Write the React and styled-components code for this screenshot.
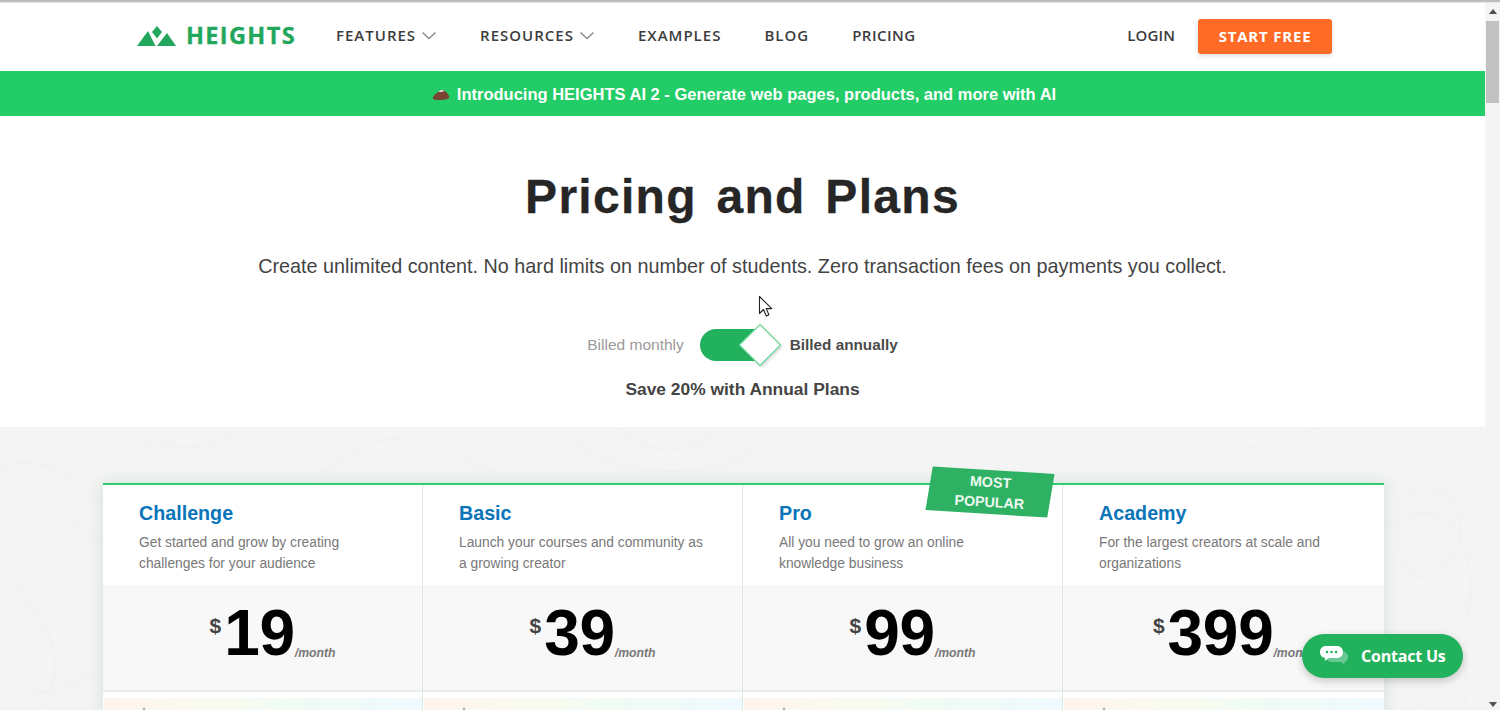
import React from "react";
import styled, { createGlobalStyle } from "styled-components";

const Global = createGlobalStyle`
  html, body { margin: 0; padding: 0; height: 100%; overflow: hidden; background: #fff; }
  * { box-sizing: border-box; }
  body { font-family: "Liberation Sans", Arial, sans-serif; color: #333; }
`;

const Shell = styled.div`
  position: relative;
  width: 1500px;
  height: 710px;
  overflow: hidden;
  display: flex;
  flex-direction: column;
`;
const WindowEdge = styled.div`
  height: 3px;
  flex: none;
  background: linear-gradient(#bdbdbd 0 2px, #e8e8e8 2px);
`;
const Body = styled.div`
  flex: 1;
  min-height: 0;
  display: flex;
`;
const Page = styled.main`
  width: 1485px;
  flex: none;
  overflow: hidden;
`;

const Scrollbar = styled.div`
  width: 15px;
  flex: none;
  display: flex;
  flex-direction: column;
  align-items: center;
  justify-content: space-between;
  padding: 6px 0 3px;
  background: #f4f4f4;
`;
const ScrollThumb = styled.div`
  width: 13px;
  height: 82px;
  margin-top: 7px;
  background: #c1c1c1;
`;
const ScrollSpacer = styled.div`
  flex: 1;
`;
const Arrow = styled.div`
  width: 0;
  height: 0;
  border-left: 4px solid transparent;
  border-right: 4px solid transparent;
  ${(p) => (p.$down ? "border-top: 5px solid #505050;" : "border-bottom: 5px solid #505050;")}
`;

const Nav = styled.header`
  height: 68px;
  display: flex;
  align-items: center;
  padding: 0 153px 2px 137px;
  background: #fff;
`;
const Logo = styled.div`
  display: flex;
  align-items: center;
  gap: 9px;
  width: 199px;
  flex: none;
`;
const LogoWord = styled.span`
  font-family: "Open Sans", sans-serif;
  font-weight: 700;
  font-size: 23.5px;
  letter-spacing: 1.35px;
  line-height: 1;
  color: #23a75d;
  -webkit-text-stroke: 0.3px #23a75d;
`;
const NavItems = styled.nav`
  display: flex;
  align-items: center;
  gap: 43px;
  flex: 1;
  margin-top: -2px;
`;
const NavItem = styled.a`
  display: flex;
  align-items: center;
  gap: 5px;
  font-family: "Open Sans", sans-serif;
  font-weight: 600;
  font-size: 15px;
  letter-spacing: ${(p) => p.$tracking ?? 1}px;
  color: #3c3c3c;
`;
const Login = styled(NavItem)`
  margin: -2px 23px 0 0;
  letter-spacing: 0.1px;
`;
const StartFree = styled.a`
  width: 134px;
  height: 35px;
  display: flex;
  align-items: center;
  justify-content: center;
  background: #ff6b26;
  border-radius: 3px;
  box-shadow: 0 2px 5px rgba(0, 0, 0, 0.14);
  color: #fff;
  font-family: "Open Sans", sans-serif;
  font-weight: 700;
  font-size: 15px;
  letter-spacing: 0.8px;
`;

const Banner = styled.div`
  height: 45px;
  display: flex;
  align-items: center;
  justify-content: center;
  gap: 7px;
  padding: 1px 0 0 3px;
  background: #22cc66;
  color: #fff;
  font-weight: 700;
  font-size: 16.5px;
`;

const Hero = styled.section`
  height: 311px;
  display: flex;
  flex-direction: column;
  align-items: center;
  padding-top: 52px;
  background: #fff;
`;
const Title = styled.h1`
  margin: 0;
  font-size: 48px;
  line-height: 58px;
  font-weight: 700;
  letter-spacing: 1.3px;
  word-spacing: 5px;
  color: #262626;
  -webkit-text-stroke: 0.3px #262626;
`;
const Subtitle = styled.p`
  margin: 27px 0 0;
  font-size: 19.8px;
  line-height: 26px;
  color: #444;
`;
const BillingRow = styled.div`
  display: flex;
  align-items: center;
  margin-top: 45px;
  height: 42px;
`;
const BillingLabel = styled.span`
  font-size: ${(p) => (p.$active ? 15.3 : 15.5)}px;
  font-weight: ${(p) => (p.$active ? 700 : 400)};
  color: ${(p) => (p.$active ? "#4a4a4a" : "#9a9a9a")};
`;
const Toggle = styled.div`
  position: relative;
  width: 60px;
  height: 32px;
  margin: 0 30px 0 16px;
  background: #22b15c;
  border-radius: 16px 0 0 16px;
`;
const Knob = styled.div`
  position: absolute;
  top: 1px;
  left: 45px;
  width: 30px;
  height: 30px;
  background: #fff;
  border: 1px solid #4fd086;
  transform: rotate(45deg);
  box-shadow: 2px 0 3px rgba(0, 0, 0, 0.16);
`;
const Save = styled.div`
  margin-top: 13px;
  font-size: 17.4px;
  font-weight: 700;
  color: #444;
`;

const Plans = styled.section`
  position: relative;
  height: 290px;
  padding: 56px 101px 0 103px;
  overflow: hidden;
  background: #f3f4f3;
`;
const Contours = styled.svg`
  position: absolute;
  inset: 0;
  width: 100%;
  height: 100%;
`;
const Grid = styled.div`
  position: relative;
  display: grid;
  grid-template-columns: 319px 320px 320px 1fr;
  height: 260px;
  background: #fff;
  border-top: 2px solid #2ecc71;
  box-shadow: 0 0 14px rgba(70, 140, 100, 0.18);
`;
const Card = styled.article`
  display: flex;
  flex-direction: column;
  position: relative;
  border-left: ${(p) => (p.$first ? "0" : "1px solid #dde5e2")};
`;
const CardHead = styled.div`
  height: 100px;
  padding: 16px 10px 0 36px;
`;
const PlanName = styled.h2`
  margin: 0;
  font-size: 19.7px;
  line-height: 24px;
  font-weight: 700;
  color: #0a75b9;
`;
const PlanDesc = styled.p`
  margin: 7px 0 0;
  font-size: 13.8px;
  line-height: 21px;
  color: #787878;
`;
const PriceBox = styled.div`
  height: 105px;
  display: flex;
  justify-content: center;
  align-items: flex-start;
  padding: 13px 0 0 20px;
  background: #f8f8f8;
`;
const Currency = styled.span`
  font-size: 21px;
  font-weight: 700;
  line-height: 24px;
  margin: 16px 3px 0 0;
  color: #444;
`;
const Amount = styled.span`
  margin-top: -1px;
  font-size: 64px;
  line-height: 72px;
  font-weight: 700;
  letter-spacing: -0.3px;
  color: #000;
`;
const Period = styled.span`
  align-self: flex-start;
  margin-top: 48px;
  font-size: 12.2px;
  line-height: 15px;
  font-weight: 700;
  font-style: italic;
  color: #777;
`;
const Divider = styled.div`
  height: 2px;
  background: #e8eeeb;
`;
const FeatureStrip = styled.div`
  position: relative;
  margin: 6px 0 0 1px;
  height: 40px;
  background: linear-gradient(90deg, #fff4ef 0%, #f8fbf0 40%, #effcf4 60%, #eefaff 100%);
`;
const StripMark = styled.span`
  position: absolute;
  top: 9px;
  left: 38px;
  width: 0;
  height: 0;
  border-left: 2px solid transparent;
  border-right: 2px solid transparent;
  border-bottom: 4px solid #a8a8a8;
`;
const Ribbon = styled.div`
  position: absolute;
  top: -15px;
  right: 11px;
  width: 122px;
  height: 44px;
  display: flex;
  align-items: center;
  justify-content: center;
  text-align: center;
  background: #2fb163;
  color: #fff;
  font-size: 14.3px;
  line-height: 20px;
  font-weight: 700;
  transform: rotate(3.5deg) skewX(-6deg);
`;
const RibbonText = styled.span`
  transform: skewX(6deg);
  opacity: 0.92;
`;

const ContactButton = styled.button`
  position: absolute;
  left: 1302px;
  top: 634px;
  width: 161px;
  height: 44px;
  display: flex;
  align-items: center;
  gap: 12px;
  padding: 0 0 0 17px;
  border: 0;
  border-radius: 22px;
  background: #22b15c;
  box-shadow: 0 3px 9px rgba(0, 0, 0, 0.2);
  color: #fff;
  font-family: "Open Sans", sans-serif;
  font-weight: 700;
  font-size: 16px;
  letter-spacing: -0.2px;
`;
const Cursor = styled.svg`
  position: absolute;
  left: 758px;
  top: 295px;
`;

const Chevron = () => (
  <svg width="16" height="9" viewBox="0 0 16 9" fill="none" aria-hidden="true">
    <path d="M1.5 1.5 8 7.5l6.5-6" stroke="#8a8a8a" strokeWidth="1.4" />
  </svg>
);

const Mountains = () => (
  <svg width="40" height="21" viewBox="0 0 40 21" aria-hidden="true">
    <path d="M0 20 11 5l7.5 15z" fill="#23a75d" />
    <path d="M20 0l5 6-5 6.5-5-6.5z" fill="#23a75d" />
    <path d="M20 20 30 7l9 13z" fill="#23a75d" />
  </svg>
);

const Mound = () => (
  <svg width="18" height="13" viewBox="0 0 18 13" aria-hidden="true">
    <path d="M1 11c-1-3 3-5 5-7 2-2 5-3 7-1 2 2 5 4 4 7-1 2-14 3-16 1z" fill="#7a4530" />
    <path d="M6.5 4c1-2 4-3 6-1-2 1-4 1-6 1z" fill="#e8e0da" />
  </svg>
);

const Chat = () => (
  <svg width="30" height="22" viewBox="0 0 30 22" aria-hidden="true">
    <path d="M13 7h11c3 0 5 2 5 5s-2 5-4 5l1 3-4-3h-9c-3 0-5-2-5-5s2-5 5-5z" fill="#6cc893" />
    <path d="M7 1h11c3.500 0 6 2.500 6 6s-2.500 6-6 6H10l-4.500 3 .8-3.100C3 12.500 1 10 1 7c0-3.500 2.500-6 6-6z" fill="#fff" />
    <circle cx="8" cy="7" r="1.300" fill="#22b15c" />
    <circle cx="12.500" cy="7" r="1.300" fill="#22b15c" />
    <circle cx="17" cy="7" r="1.300" fill="#22b15c" />
  </svg>
);

const contourPaths = [
  "M0 40C60 20 90 70 150 120S260 90 330 40 430 10 520 60",
  "M0 80C50 60 100 110 140 160S90 260 20 270",
  "M40 290C80 220 30 180 10 150",
  "M560 0C600 50 700 60 760 20",
  "M620 0C650 30 690 30 720 0",
  "M1400 70C1440 40 1480 90 1450 130S1390 150 1400 70",
  "M1390 100C1440 60 1475 110 1470 170S1420 290 1400 290",
  "M1420 220C1450 190 1480 240 1460 290",
  "M1120 10C1200 40 1260 20 1320 0",
  "M240 0C200 30 180 20 120 10",
];

const plans = [
  { name: "Challenge", desc: ["Get started and grow by creating", "challenges for your audience"], price: 19 },
  { name: "Basic", desc: ["Launch your courses and community as", "a growing creator"], price: 39 },
  { name: "Pro", desc: ["All you need to grow an online", "knowledge business"], price: 99, popular: true },
  { name: "Academy", desc: ["For the largest creators at scale and", "organizations"], price: 399 },
];

export default function App() {
  return (
    <>
      <Global />
      <Shell>
        <WindowEdge />
        <Body>
          <Page>
            <Nav>
              <Logo>
                <Mountains />
                <LogoWord>HEIGHTS</LogoWord>
              </Logo>
              <NavItems>
                <NavItem>FEATURES <Chevron /></NavItem>
                <NavItem>RESOURCES <Chevron /></NavItem>
                <NavItem>EXAMPLES</NavItem>
                <NavItem>BLOG</NavItem>
                <NavItem $tracking={0.5}>PRICING</NavItem>
              </NavItems>
              <Login>LOGIN</Login>
              <StartFree>START FREE</StartFree>
            </Nav>
            <Banner>
              <Mound />
              <span>Introducing HEIGHTS AI 2 - Generate web pages, products, and more with AI</span>
            </Banner>
            <Hero>
              <Title>Pricing and Plans</Title>
              <Subtitle>
                Create unlimited content. No hard limits on number of students. Zero transaction fees on payments you collect.
              </Subtitle>
              <BillingRow>
                <BillingLabel>Billed monthly</BillingLabel>
                <Toggle><Knob /></Toggle>
                <BillingLabel $active>Billed annually</BillingLabel>
              </BillingRow>
              <Save>Save 20% with Annual Plans</Save>
            </Hero>
            <Plans>
              <Contours viewBox="0 0 1485 290" fill="none" aria-hidden="true">
                {contourPaths.map((d) => (
                  <path key={d} d={d} stroke="#eff0ef" strokeWidth="1.2" />
                ))}
              </Contours>
              <Grid>
                {plans.map((plan, i) => (
                  <Card key={plan.name} $first={i === 0}>
                    <CardHead>
                      <PlanName>{plan.name}</PlanName>
                      <PlanDesc>{plan.desc[0]}<br />{plan.desc[1]}</PlanDesc>
                    </CardHead>
                    <PriceBox>
                      <Currency>$</Currency>
                      <Amount>{plan.price}</Amount>
                      <Period>/month</Period>
                    </PriceBox>
                    <Divider />
                    <FeatureStrip><StripMark /></FeatureStrip>
                    {plan.popular && (
                      <Ribbon><RibbonText>MOST<br />POPULAR</RibbonText></Ribbon>
                    )}
                  </Card>
                ))}
              </Grid>
            </Plans>
          </Page>
          <Scrollbar>
            <Arrow />
            <ScrollThumb />
            <ScrollSpacer />
            <Arrow $down />
          </Scrollbar>
        </Body>
        <Cursor width="16" height="24" viewBox="0 0 16 24" aria-hidden="true">
          <path d="M1.5 1.5v17l4-4 2.8 6.5 2.6-1.2-2.7-6.2h5.600z" fill="#fff" stroke="#222" strokeWidth="1.1" strokeLinejoin="round" />
        </Cursor>
        <ContactButton>
          <Chat />
          <span>Contact Us</span>
        </ContactButton>
      </Shell>
    </>
  );
}
